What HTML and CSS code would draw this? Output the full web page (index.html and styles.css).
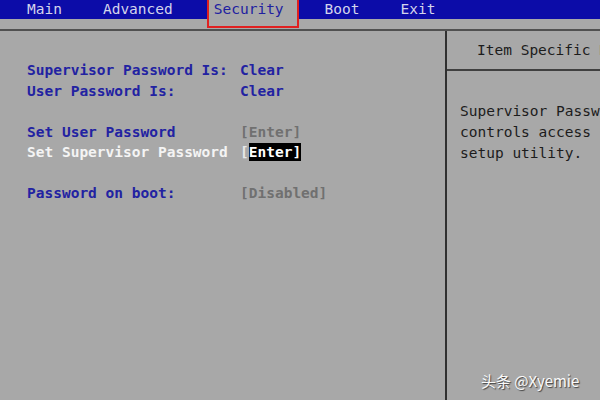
FILE: index.html
```html
<!DOCTYPE html>
<html lang="en">
<head>
    <meta charset="UTF-8">
    <title>BIOS Setup Utility - Security</title>
    <link rel="stylesheet" href="styles.css">
</head>
<body>
<nav class="menu">
    <span class="tab">Main</span>
    <span class="tab">Advanced</span>
    <span class="tab active">Security</span>
    <span class="tab">Boot</span>
    <span class="tab">Exit</span>
</nav>
<main class="screen">
    <section class="settings">
        <div class="row"><span class="label">Supervisor Password Is:</span><span class="value">Clear</span></div>
        <div class="row"><span class="label">User Password Is:</span><span class="value">Clear</span></div>
        <div class="row blank"></div>
        <div class="row"><span class="label">Set User Password</span><span class="option">[Enter]</span></div>
        <div class="row selected"><span class="label">Set Supervisor Password</span><span class="option">[<span class="cursor">Enter]</span></span></div>
        <div class="row blank"></div>
        <div class="row"><span class="label">Password on boot:</span><span class="option">[Disabled]</span></div>
    </section>
    <aside class="help">
        <div class="help-title">Item Specific Help</div>
        <div class="help-text">
            <div>Supervisor Password</div>
            <div>controls access to the</div>
            <div>setup utility.</div>
        </div>
    </aside>
</main>
<div class="watermark">头条 @Xyemie</div>
</body>
</html>
```

FILE: styles.css
```css
body {
    margin: 0;
    width: 600px;
    height: 400px;
    overflow: hidden;
    position: relative;
    background-color: #a8a8a8;
    font-family: "DejaVu Sans Mono", "Liberation Mono", monospace;
    font-size: 14.5px;
}

.menu {
    display: flex;
    align-items: flex-start;
    height: 29px;
    padding-left: 27px;
    background: linear-gradient(#0c0ca8 0, #0c0ca8 19px, #a8a8a8 19px);
    border-bottom: 2px solid #505050;
}

.tab {
    margin-right: 41px;
    height: 19px;
    line-height: 19px;
    color: #d4d4ec;
    white-space: nowrap;
}

.tab.active {
    margin-left: -7px;
    margin-right: 26px;
    height: 25px;
    padding: 1px 13px 0 5px;
    border: 2px solid #e02020;
    border-top: none;
    background-color: #a8a8a8;
    color: #2020a0;
    line-height: 17px;
}

.screen {
    display: flex;
    height: 369px;
}

.settings {
    flex: 0 0 418px;
    padding: 29px 0 0 27px;
    border-right: 2px solid #303030;
}

.row {
    display: flex;
    height: 20.5px;
    line-height: 20.5px;
    white-space: nowrap;
}

.label {
    width: 213px;
    color: #2222a2;
    font-weight: bold;
}

.value {
    color: #2222a2;
    font-weight: bold;
}

.option {
    color: #707070;
    font-weight: bold;
}

.selected .label {
    color: #f4f4f4;
}

.selected .option {
    color: #e8e8e8;
}

.cursor {
    background-color: #000;
    color: #fff;
    padding: 1px 0;
}

.help {
    flex: 1;
    min-width: 0;
    overflow: hidden;
    color: #1c1c1c;
}

.help-title {
    height: 38px;
    line-height: 38px;
    padding-left: 30px;
    border-bottom: 2px solid #404040;
    white-space: nowrap;
}

.help-text {
    padding: 30px 0 0 13px;
    white-space: nowrap;
}

.help-text div {
    height: 20.75px;
    line-height: 20.75px;
}

.watermark {
    position: absolute;
    left: 481px;
    top: 370px;
    font-family: "Noto Sans CJK SC", "Noto Sans", sans-serif;
    font-size: 15px;
    color: #fafafa;
    text-shadow: 1px 1px 1px #404040;
}
```
